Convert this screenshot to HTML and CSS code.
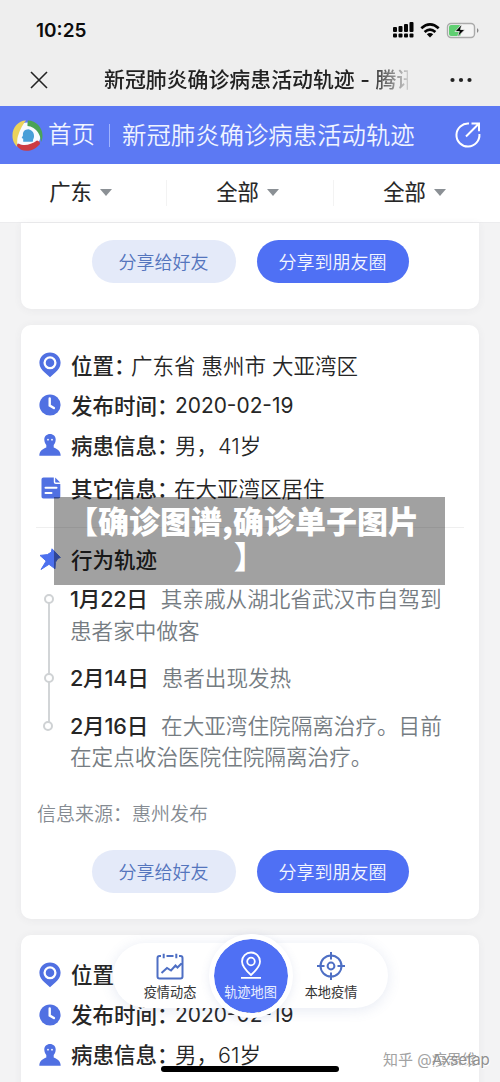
FILE: index.html
```html
<!DOCTYPE html>
<html lang="zh-CN">
<head>
<meta charset="utf-8">
<title>新冠肺炎确诊病患活动轨迹</title>
<link rel="stylesheet" href="styles.css">
</head>
<body>
<svg class="defs" width="0" height="0">
  <symbol id="pin" viewBox="0 0 22 26"><path fill="#5070e2" d="M11 .5C5 .5.4 5 .4 10.800c0 4.200 2.400 7.300 5.300 9.800L11 25.300l5.300-4.700c2.900-2.500 5.300-5.600 5.300-9.800C21.600 5 17 .5 11 .5z"/><circle cx="11" cy="10.800" r="5.400" fill="none" stroke="#fff" stroke-width="2.300"/></symbol>
  <symbol id="clock" viewBox="0 0 22 22"><circle cx="11" cy="11" r="10.600" fill="#5070e2"/><path d="M10.700 4.500v7l4.200 2.600" fill="none" stroke="#fff" stroke-width="2.400" stroke-linecap="round"/></symbol>
  <symbol id="person" viewBox="0 0 22 22"><path fill="#5070e2" d="M11 0C7.800 0 5.300 2.300 5.300 5.500c0 2.400 1 4.300 2 5.500v2.500C3.800 15 .5 16.500.3 21.700h21.400c-.2-5.200-3.500-6.700-7-8.200V11c1-1.200 2-3.100 2-5.500C16.700 2.300 14.200 0 11 0z"/><circle cx="9" cy="5.700" r=".9" fill="#fff"/><circle cx="13" cy="5.700" r=".9" fill="#fff"/></symbol>
  <symbol id="doc" viewBox="0 0 20 22"><path fill="#5070e2" d="M2.500.5h10.300v4.500c0 1.300.8 2 2 2h4.500v12.500c0 1.300-.8 2-2 2H2.500c-1.300 0-2-.8-2-2v-17c0-1.300.8-2 2-2z"/><path fill="#5070e2" d="M14.200.5l5 5h-4c-.7 0-1-.4-1-1z"/><path d="M4.500 10.800h11M4.500 16h6" stroke="#fff" stroke-width="2" stroke-linecap="round"/></symbol>
  <symbol id="tack" viewBox="0 0 22 22"><path fill="#4c70ee" stroke="#4c70ee" stroke-linejoin="round" d="M13 .8L21.400 9.500l-2.400.8-2.600 4 -.4 6.500-6-4.500-8 5.200 5.200-8.500L1 7.400l7.400-.8 4-2.500z"/></symbol>
</svg>
<div class="screen">
  <div class="status">
    <span class="time">10:25</span>
    <svg width="87" height="18" viewBox="0 0 87 18">
      <g fill="#050505"><rect x="0" y="6" width="4" height="5" rx="1"/><rect x="5.500" y="5" width="4" height="6" rx="1"/><rect x="11" y="3" width="4" height="8" rx="1"/><rect x="16.500" y="1" width="4" height="10" rx="1"/><rect x="0" y="12.600" width="4" height="4" rx="1"/><rect x="5.500" y="12.600" width="4" height="4" rx="1"/><rect x="11" y="12.600" width="4" height="4" rx="1"/><rect x="16.500" y="12.600" width="4" height="4" rx="1"/></g>
      <g fill="none" stroke="#050505" stroke-width="2.700"><path d="M28.300 7.300q8.700-7.800 17.400 0M31.600 11q5.400-4.800 10.800 0"/></g><path d="M33.800 13.200q3.200-2.400 6.400 0L37 16.400z" fill="#050505"/>
      <rect x="54.500" y="2.500" width="27" height="14" rx="3.500" fill="#f4f4f4" stroke="#aaa" stroke-width="1.400"/><rect x="56" y="4" width="12" height="11" rx="2" fill="#60cf72"/><path d="M84 7q3 2.300 0 5z" fill="#888"/><path d="M69 3l-7 7.500h4.300L64.500 16l7.500-7.500h-4.500z" fill="#050505" stroke="#f4f4f4" stroke-width=".8"/>
    </svg>
  </div>
  <div class="nav">
    <svg width="18" height="18" viewBox="0 0 18 18"><path d="M1 1l16 16M17 1L1 17" stroke="#222" stroke-width="1.600"/></svg>
    <div class="navtitle">新冠肺炎确诊病患活动轨迹 - 腾讯</div>
    <svg width="22" height="6" viewBox="0 0 22 6"><g fill="#222"><circle cx="2.500" cy="3" r="2.100"/><circle cx="11" cy="3" r="2.100"/><circle cx="19.500" cy="3" r="2.100"/></g></svg>
  </div>
  <div class="banner">
    <svg width="31" height="31" viewBox="0 0 31 31"><circle cx="15.500" cy="15.500" r="13" fill="#f7faff"/><path d="M14 .6C5 .8-1.500 10 1 20c.8 3 2.500 5.500 4.500 7-.5-5-.5-9 1-12.500C8 10 11 4 14 .6z" fill="#ecd35c"/><path d="M16 .5c8 0 14.500 7 14.500 15 0 3-.6 5-1.500 6.500-.5-6.500-3-11-7.500-14-2-1.300-4-2-6-2 0-2.500 0-4 .5-5.500z" fill="#4aa357"/><path d="M6.500 23.500c5.500 3 12 1.500 18.500-3 2 .6 3 1.800 3 3.500C21 32.500 9.500 33 5 26c0-1 .5-2 1.500-2.500z" fill="#cc3b43"/><path d="M16.500 9.300c-4 0-6 2.800-5.500 6l-1.300 2.700 1.500.7v3h9.500l.5-2.500c1.700-2 1.300-8.900-4.700-9.900z" fill="#489ed8"/></svg>
    <span class="home">首页</span><i class="bar"></i><span class="headline">新冠肺炎确诊病患活动轨迹</span>
    <svg class="share" width="26" height="26" viewBox="0 0 26 26" fill="none" stroke="#fff" stroke-width="2"><path d="M14 1.600A11.500 11.500 0 1 0 24.400 12M11 14.500L23.500 2M16.500 1.600H24v7.600"/></svg>
  </div>
  <div class="filters"><div>广东<i></i></div><div>全部<i></i></div><div>全部<i></i></div></div>
  <div class="feed">
    <section class="card first"><div class="actions"><span class="btn light">分享给好友</span><span class="btn solid">分享到朋友圈</span></div></section>
    <section class="card">
      <div class="row"><svg width="22" height="26"><use href="#pin"/></svg><b>位置：</b><span>广东省 惠州市 大亚湾区</span></div>
      <div class="row"><svg width="22" height="22"><use href="#clock"/></svg><b>发布时间：</b><span class="date">2020-02-19</span></div>
      <div class="row"><svg width="22" height="22"><use href="#person"/></svg><b>病患信息：</b><span>男，41岁</span></div>
      <div class="row other"><svg width="20" height="22"><use href="#doc"/></svg><b>其它信息：</b><span>在大亚湾区居住</span></div>
      <div class="rule"></div>
      <div class="row track"><svg width="22" height="22"><use href="#tack"/></svg><b>行为轨迹</b></div>
      <ol class="timeline">
        <li><b>1月22日</b>其亲戚从湖北省武汉市自驾到<br>患者家中做客</li>
        <li><b>2月14日</b>患者出现发热</li>
        <li><b>2月16日</b>在大亚湾住院隔离治疗。目前<br>在定点收治医院住院隔离治疗。</li>
      </ol>
      <div class="source">信息来源：惠州发布</div>
      <div class="actions"><span class="btn light">分享给好友</span><span class="btn solid">分享到朋友圈</span></div>
    </section>
    <section class="card last">
      <div class="row"><svg width="22" height="26"><use href="#pin"/></svg><b>位置</b></div>
      <div class="row"><svg width="22" height="22"><use href="#clock"/></svg><b>发布时间：</b><span class="date">2020-02-19</span></div>
      <div class="row"><svg width="22" height="22"><use href="#person"/></svg><b>病患信息：</b><span>男，61岁</span></div>
    </section>
  </div>
  <div class="caption"><span class="line">【确诊图谱,确诊单子图片</span><span>】</span></div>
  <div class="dock">
    <div class="tab"><svg width="28" height="27" viewBox="0 0 28 27" fill="none" stroke="#4e6fc4" stroke-width="2"><path d="M5 3H3.500Q1.500 3 1.500 5v18.500q0 2 2 2h21q2 0 2-2V5q0-2-2-2H23M10.500 3h7M7.700.8v4.500M20.300.8v4.500M5.500 20l5.500-5 4 2.500 4.500-5 2 2 4-4"/></svg>疫情动态</div>
    <div class="tab active"><svg width="26" height="28" viewBox="0 0 26 28" fill="none" stroke="#fff" stroke-width="1.800"><path d="M13 24C8 19.500 4 15.500 4 10.500a9 9 0 0 1 18 0c0 5-4 9-9 13.500zM3 26.800h20"/><circle cx="13" cy="10.500" r="3.800"/></svg>轨迹地图</div>
    <div class="tab"><svg width="30" height="30" viewBox="0 0 30 30" fill="none" stroke="#4e6fc4" stroke-width="2"><circle cx="15" cy="15" r="10.500"/><circle cx="15" cy="15" r="3.400"/><path d="M15 1v7.500M15 21.500V29M1 15h7.500M21.500 15H29"/></svg>本地疫情</div>
  </div>
  <div class="indicator"></div>
  <div class="mark">知乎 @疫思维<span>Axsetap</span></div>
</div>
</body>
</html>
```
FILE: styles.css
```css
* { box-sizing: border-box; }
body { margin: 0; font-family: Inter, "Noto Sans CJK SC", sans-serif; color: #262626; }
svg { flex: none; display: block; }
.defs { position: absolute; }
.screen { position: relative; width: 500px; height: 1082px; overflow: hidden; display: flex; flex-direction: column; background: #f3f3f4; white-space: nowrap; }
.status { height: 58px; flex: none; background: #eee; display: flex; justify-content: space-between; align-items: center; padding: 2px 20px 0 36px; }
.time { font-size: 19px; font-weight: 600; color: #0c0c0c; }
.nav { height: 48px; flex: none; background: #eee; display: flex; align-items: center; padding: 0 28px 5px 30px; }
.navtitle { margin-left: 56px; width: 304px; margin-right: 42px; overflow: hidden; font-size: 20.900px; font-weight: 500; line-height: 32px; color: #222; -webkit-mask-image: linear-gradient(90deg, #000 265px, transparent 312px); mask-image: linear-gradient(90deg, #000 265px, transparent 312px); }
.banner { height: 58px; flex: none; background: #5c79f3; display: flex; align-items: center; color: #f0f4ff; padding: 0 19px 0 12px; font-size: 24.400px; font-weight: 350; line-height: 36px; }
.home { margin-left: 5px; font-size: 23.500px; }
.bar { width: 1px; height: 23px; background: #9fb3ff; margin: 0 12px 0 14px; }
.share { margin-left: auto; }
.filters { height: 59px; flex: none; background: #fff; display: flex; border-bottom: 1px solid #ececee; font-size: 21.300px; line-height: 32px; -webkit-text-stroke: .15px; }
.filters div { flex: 1; display: flex; align-items: center; justify-content: center; padding: 0 6px 2px 0; background: linear-gradient(#f3f3f3, #f3f3f3) right 50% / 1px 26px no-repeat; }
.filters div:last-child { background: none; padding-right: 5px; }
.filters i { margin-left: 8px; border: 6px solid transparent; border-top: 7px solid #8b9095; border-bottom: 0; }
.feed { display: flex; flex-direction: column; gap: 16px; padding: 0 21px; }
.card { background: #fff; border-radius: 10px; padding: 20px 16px 26px 18px; box-shadow: 0 1px 8px rgba(70, 75, 90, .06); }
.card.first { height: 86px; padding-top: 17px; border-radius: 0 0 10px 10px; }
.card.last { height: 170px; }
.actions { display: flex; gap: 21px; padding-left: 53px; }
.btn { height: 43px; border-radius: 22px; display: flex; align-items: center; justify-content: center; font-size: 18px; font-weight: 350; padding: 0 1px 1px 0; }
.light { width: 144px; color: #5475bd; background: #e4eaf9; }
.solid { width: 152px; color: #f4f6ff; background: #4f70f4; }
.row { height: 40px; display: flex; align-items: center; font-size: 21.500px; font-weight: 350; }
.row b, .row span { padding-bottom: 2px; }
.row b { margin-left: 10px; width: 104px; font-weight: 500; }
.row:first-child b { width: 60px; }
.row .date { font-size: 20.900px; font-weight: 400; padding-bottom: 0; }
.other { height: 46px; padding-left: 2px; }
.other b { width: 103px; }
.rule { height: 1px; margin: 16px -1px 11px -3px; background: #efefef; }
.timeline { list-style: none; margin: 5px 0 0; padding: 0 0 0 31px; font-size: 21.600px; line-height: 31.500px; font-weight: 350; color: #757c82; display: flex; flex-direction: column; gap: 16px; }
.timeline li { position: relative; }
.timeline b { color: #262626; font-weight: 500; margin-right: 13px; letter-spacing: -.2px; }
.timeline li::before { content: ""; position: absolute; left: -26px; top: 10px; width: 10px; height: 10px; border: 2px solid #cfd2d4; border-radius: 50%; background: #fff; z-index: 1; box-sizing: border-box; }
.timeline li:last-child::before { left: -27px; }
.timeline li:not(:last-child)::after { content: ""; position: absolute; left: -22px; top: 19px; width: 1.500px; height: calc(100% + 8px); background: #d2d5d7; }
.source { height: 24px; line-height: 24px; margin: 29px 0 23px -2px; font-size: 19px; font-weight: 350; color: #858b92; }
.caption { position: absolute; left: 54px; top: 497px; width: 391px; height: 88px; padding: 5px 0; background: rgba(0, 0, 0, .37); color: #fff; font: 900 31px/35px "Noto Sans CJK SC", sans-serif; display: flex; flex-direction: column; align-items: center; z-index: 2; }
.line { padding-right: 13px; }
.dock { position: absolute; left: 113px; top: 943px; width: 275px; height: 65px; border-radius: 33px; background: #fff; box-shadow: 0 2px 14px rgba(80, 105, 170, .14); display: flex; justify-content: space-between; align-items: center; padding: 0 22px; font-size: 13.200px; }
.tab { width: 70px; height: 58px; display: flex; flex-direction: column; align-items: center; justify-content: flex-end; gap: 2px; padding-bottom: 3px; line-height: 20px; color: #333; }
.tab:last-child { gap: 1px; }
.active { width: 84px; height: 84px; flex: none; border: 5px solid #fff; border-radius: 50%; background: #4f70f4; background-clip: padding-box; color: #e9efff; justify-content: center; gap: 3px; padding: 2px 0 0; box-shadow: 0 2px 10px rgba(80, 105, 170, .12); }
.indicator { position: absolute; left: 161px; top: 1066px; width: 178px; height: 6px; border-radius: 3px; background: #000; }
.mark { position: absolute; left: 383px; top: 1049px; font-size: 15px; line-height: 22px; color: #a2a2a2; text-shadow: 1px 1px #fff; }
.mark span { position: absolute; left: 49px; top: 0; color: #8f8f8f; }
```
